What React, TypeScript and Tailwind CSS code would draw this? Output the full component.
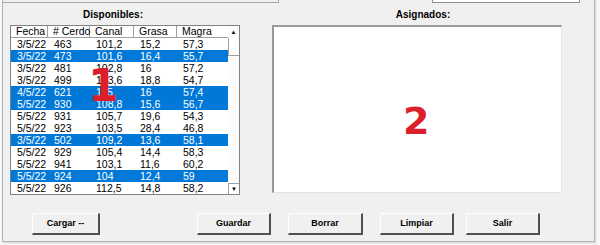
import React from 'react';

type Row = { fecha: string; cerdo: string; canal: string; grasa: string; magra: string; sel?: boolean };

const rows: Row[] = [
  { fecha: '3/5/22', cerdo: '463', canal: '101,2', grasa: '15,2', magra: '57,3' },
  { fecha: '3/5/22', cerdo: '473', canal: '101,6', grasa: '16,4', magra: '55,7', sel: true },
  { fecha: '3/5/22', cerdo: '481', canal: '102,8', grasa: '16', magra: '57,2' },
  { fecha: '3/5/22', cerdo: '499', canal: '103,6', grasa: '18,8', magra: '54,7' },
  { fecha: '4/5/22', cerdo: '621', canal: '115', grasa: '16', magra: '57,4', sel: true },
  { fecha: '5/5/22', cerdo: '930', canal: '108,8', grasa: '15,6', magra: '56,7', sel: true },
  { fecha: '5/5/22', cerdo: '931', canal: '105,7', grasa: '19,6', magra: '54,3' },
  { fecha: '5/5/22', cerdo: '923', canal: '103,5', grasa: '28,4', magra: '46,8' },
  { fecha: '3/5/22', cerdo: '502', canal: '109,2', grasa: '13,6', magra: '58,1', sel: true },
  { fecha: '5/5/22', cerdo: '929', canal: '105,4', grasa: '14,4', magra: '58,3' },
  { fecha: '5/5/22', cerdo: '941', canal: '103,1', grasa: '11,6', magra: '60,2' },
  { fecha: '5/5/22', cerdo: '924', canal: '104', grasa: '12,4', magra: '59', sel: true },
  { fecha: '5/5/22', cerdo: '926', canal: '112,5', grasa: '14,8', magra: '58,2' },
];

const cols = ['w-[37px]', 'w-[42px]', 'w-[44px]', 'w-[43px]', 'w-[51px]'];
const headers = ['Fecha', '# Cerdo', 'Canal', 'Grasa', 'Magra'];

function Button({ label, className }: { label: string; className: string }) {
  return (
    <button
      className={`${className} h-[22px] bg-[#f0f0f0] border-t border-l border-t-white border-l-white border-r-2 border-b-2 border-r-[#505050] border-b-[#505050] text-[9px] font-bold text-black flex items-center justify-center`}
    >
      {label}
    </button>
  );
}

export default function App() {
  return (
    <div
      className="w-[600px] h-[245px] bg-[#f8f8f8] overflow-hidden flex"
      style={{ fontFamily: '"Liberation Sans", Arial, sans-serif' }}
    >
      <div className="ml-[2px] w-[593px] h-[242px] bg-[#f0f0f0] border-l border-r border-b border-[#b4b4b4] shadow-[1px_1px_2px_rgba(0,0,0,0.15)] flex flex-col">
        {/* cut-off controls above */}
        <div className="h-[3px] flex">
          <div className="w-[276px] border-b border-r border-[#a8a8a8]" />
          <div className="ml-[153px] w-[148px] border-b border-l border-r border-[#8f8f8f] bg-white" />
        </div>

        <div className="flex">
          {/* Disponibles */}
          <div className="ml-[7px] w-[230px] flex flex-col">
            <div className="h-[22px] flex items-center justify-center pr-[24px] text-[10px] font-bold text-black">
              Disponibles:
            </div>
            <div className="relative h-[170px] bg-white border border-[#828282] flex">
              <div className="w-[217px] flex flex-col">
                <div className="h-[12px] flex border-b border-[#a0a0a0] text-[10.5px] leading-[11px] text-black">
                  {headers.map((h, i) => (
                    <div key={h} className={`${cols[i]} pl-[5px] border-r border-[#a0a0a0] last:border-r-0 whitespace-nowrap`}>
                      {h}
                    </div>
                  ))}
                </div>
                {rows.map((r, idx) => (
                  <div
                    key={idx}
                    className={`h-[12px] flex text-[10.5px] leading-[12px] ${r.sel ? 'bg-[#0078d7] text-white' : 'text-black'}`}
                  >
                    {[r.fecha, r.cerdo, r.canal, r.grasa, r.magra].map((v, i) => (
                      <div key={i} className={`${cols[i]} pl-[6px] whitespace-nowrap`}>
                        {v}
                      </div>
                    ))}
                  </div>
                ))}
              </div>
              {/* scrollbar */}
              <div className="w-[11px] flex flex-col bg-[#fbfbfb]">
                <div className="h-[12px] flex items-center justify-center text-[6px] text-black">▲</div>
                <div className="h-[18px] bg-white border-l border-b border-[#a0a0a0]" />
                <div className="flex-1" />
                <div className="h-[11px] flex items-center justify-center text-[6px] text-black border-l border-t border-[#a0a0a0] bg-white">▼</div>
              </div>
              <span
                className="absolute left-[77px] top-[38px] text-[44px] leading-none font-bold text-[#dc1f2b]"
                style={{ fontFamily: '"DejaVu Sans", sans-serif' }}
              >
                1
              </span>
            </div>
          </div>

          {/* Asignados */}
          <div className="ml-[32px] w-[290px] flex flex-col">
            <div className="h-[22px] flex items-center justify-center pl-[12px] text-[10px] font-bold text-black">
              Asignados:
            </div>
            <div className="relative h-[168px] bg-white border-t-2 border-l-2 border-t-[#9a9a9a] border-l-[#9a9a9a] border-r border-b border-r-[#e3e3e3] border-b-[#e3e3e3]">
              <span
                className="absolute left-[129px] top-[75px] text-[38px] leading-none font-bold text-[#dc1f2b]"
                style={{ fontFamily: '"DejaVu Sans", sans-serif' }}
              >
                2
              </span>
            </div>
          </div>
        </div>

        {/* buttons */}
        <div className="flex mt-[18px]">
          <Button label="Cargar --" className="ml-[29px] w-[68px]" />
          <Button label="Guardar" className="ml-[97px] w-[74px]" />
          <Button label="Borrar" className="ml-[17px] w-[75px]" />
          <Button label="Limpiar" className="ml-[17px] w-[74px]" />
          <Button label="Salir" className="ml-[12px] w-[74px]" />
        </div>
      </div>
      <div className="flex-1 border-l border-[#e0e0e0]" />
    </div>
  );
}
